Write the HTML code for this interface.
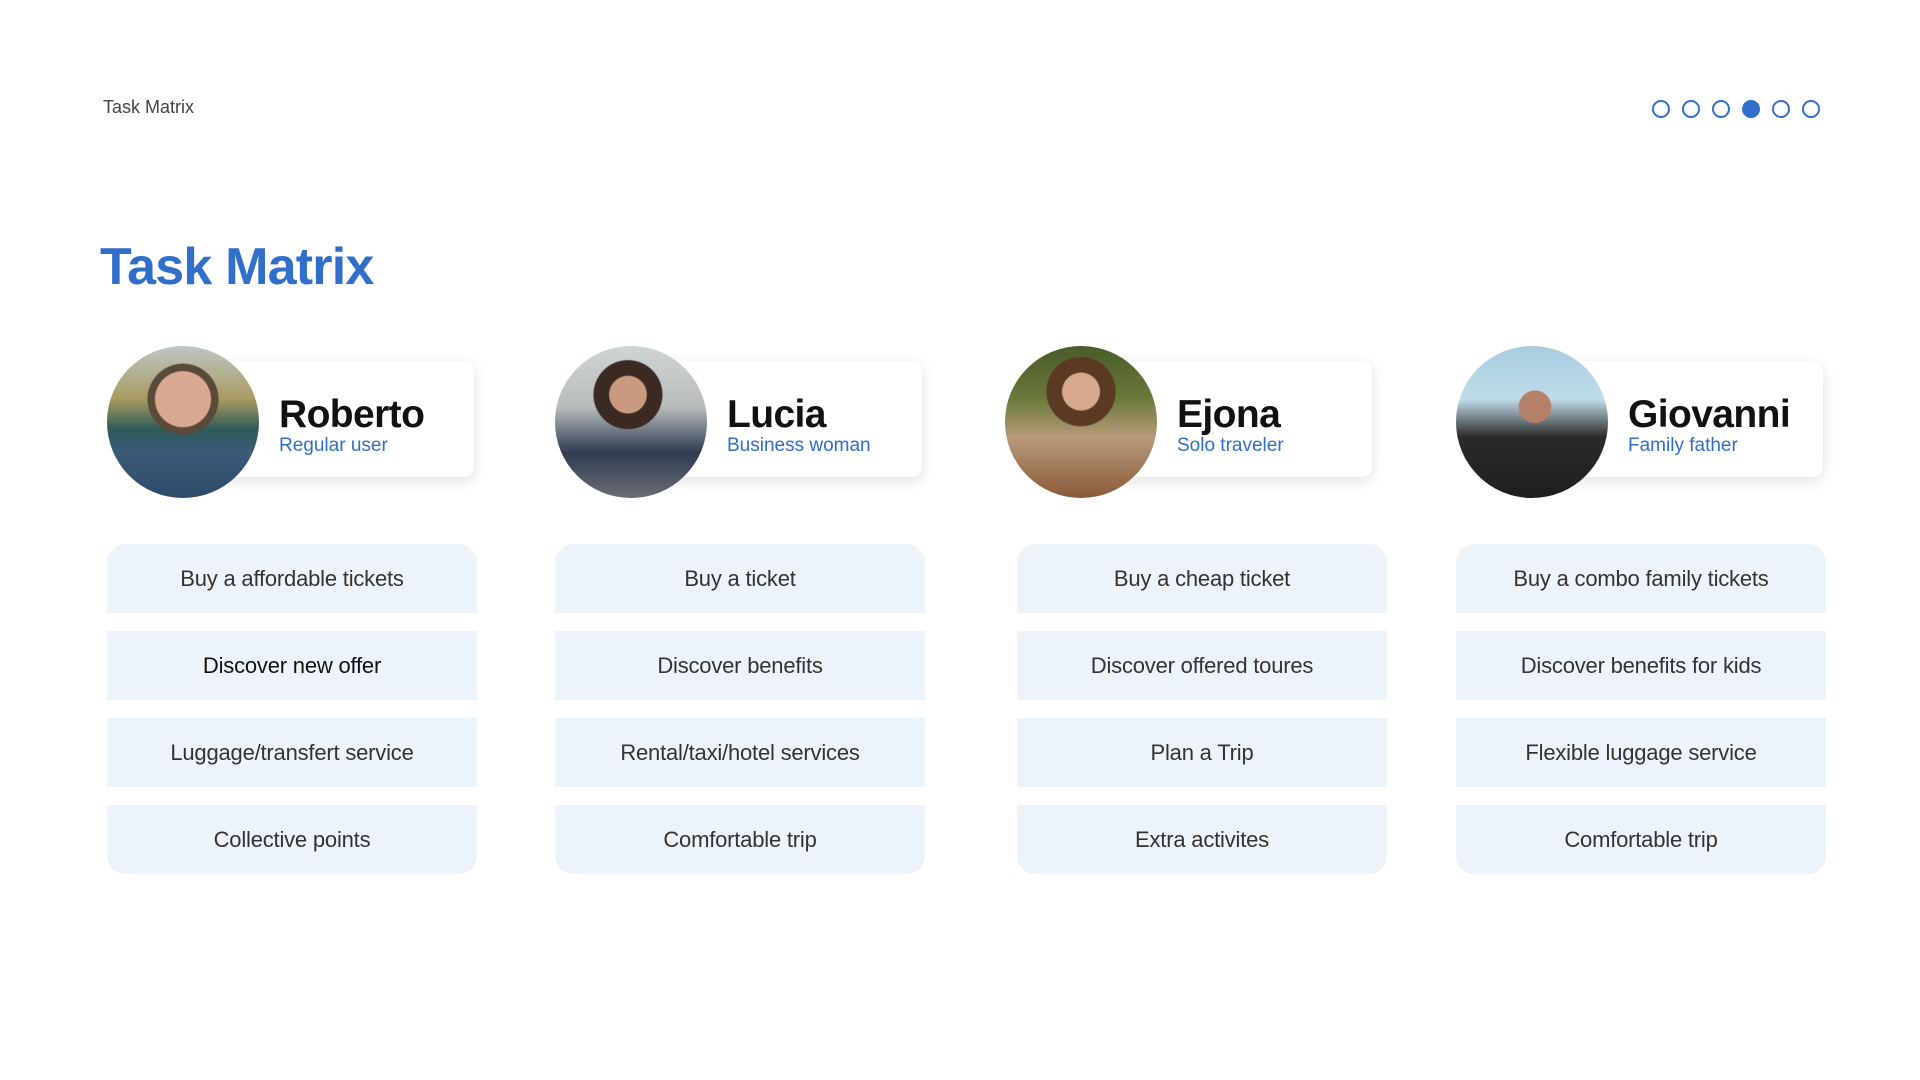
<!DOCTYPE html>
<html><head><meta charset="utf-8"><style>
*{margin:0;padding:0;box-sizing:border-box}
body{width:1920px;height:1080px;background:#fff;font-family:"Liberation Sans",sans-serif;position:relative;overflow:hidden}
.small{position:absolute;left:103px;top:97px;font-size:18px;color:#444}
.dots{position:absolute;top:100px;left:1652px;display:flex;gap:12px}
.dots span{width:18px;height:18px;border:2px solid #3070cc;border-radius:50%}
.dots span.f{background:#3070cc}
h1{position:absolute;left:100px;top:237px;font-size:52px;font-weight:bold;color:#2f6fc9;letter-spacing:-0.8px}
.col{position:absolute;top:0;width:370px}
.card{position:absolute;top:361px;left:60px;width:307px;height:116px;background:#fff;border-radius:10px;box-shadow:0 4px 14px rgba(0,0,0,.12)}
.av{position:absolute;top:346px;left:0;width:152px;height:152px;border-radius:50%;overflow:hidden}
.name{position:absolute;left:172px;top:393px;font-size:39px;font-weight:bold;color:#111;letter-spacing:-0.6px}
.role{position:absolute;left:172px;top:435px;font-size:19px;color:#2f6fc9}
.task{position:absolute;left:0;width:370px;height:69px;background:#edf3fb;display:flex;align-items:center;justify-content:center;font-size:22px;color:#333;letter-spacing:-0.2px}
.t1{top:544px;border-radius:18px 18px 0 0}.t2{top:631px}.t3{top:718px}.t4{top:805px;border-radius:0 0 18px 18px}
</style></head><body>
<div class="small">Task Matrix</div>
<div class="dots"><span></span><span></span><span></span><span class="f"></span><span></span><span></span></div>
<h1>Task Matrix</h1>

<div class="col" style="left:107px">
<div class="card"></div>
<div class="av" style="background:radial-gradient(circle at 50% 35%,#d9a890 0 22%,#5a4a3a 23% 28%,transparent 29%),linear-gradient(180deg,#bfc6c6 0%,#a89a60 35%,#2e5a5a 55%,#3c5a78 70%,#2e4a6a 100%)"></div>
<div class="name">Roberto</div><div class="role">Regular user</div>
<div class="task t1">Buy a affordable tickets</div>
<div class="task t2" style="color:#111">Discover new offer</div>
<div class="task t3">Luggage/transfert service</div>
<div class="task t4">Collective points</div>
</div>

<div class="col" style="left:555px">
<div class="card"></div>
<div class="av" style="background:radial-gradient(circle at 48% 32%,#c99a80 0 14%,#3a2a22 15% 26%,transparent 27%),linear-gradient(180deg,#cfd4d4 0%,#b8bcbc 40%,#2f3b52 70%,#6a6e74 100%)"></div>
<div class="name">Lucia</div><div class="role">Business woman</div>
<div class="task t1">Buy a ticket</div>
<div class="task t2">Discover benefits</div>
<div class="task t3">Rental/taxi/hotel services</div>
<div class="task t4">Comfortable trip</div>
</div>

<div class="col" style="left:1005px">
<div class="card" style="left:60px"></div>
<div class="av" style="background:radial-gradient(circle at 50% 30%,#d7a88c 0 14%,#5a3a24 15% 26%,transparent 27%),linear-gradient(180deg,#4a5a2a 0%,#6a7a3a 35%,#b89a7a 60%,#8a5a3a 100%)"></div>
<div class="name">Ejona</div><div class="role">Solo traveler</div>
<div class="task t1" style="left:12px">Buy a cheap ticket</div>
<div class="task t2" style="left:12px">Discover offered toures</div>
<div class="task t3" style="left:12px">Plan a Trip</div>
<div class="task t4" style="left:12px">Extra activites</div>
</div>

<div class="col" style="left:1456px">
<div class="card"></div>
<div class="av" style="background:radial-gradient(circle at 52% 40%,#b48068 0 13%,transparent 14%),linear-gradient(180deg,#a8cce0 0%,#c0dcea 35%,#2a2a2a 60%,#1e1e1e 100%)"></div>
<div class="name">Giovanni</div><div class="role">Family father</div>
<div class="task t1">Buy a combo family tickets</div>
<div class="task t2">Discover benefits for kids</div>
<div class="task t3">Flexible luggage service</div>
<div class="task t4">Comfortable trip</div>
</div>
</body></html>
